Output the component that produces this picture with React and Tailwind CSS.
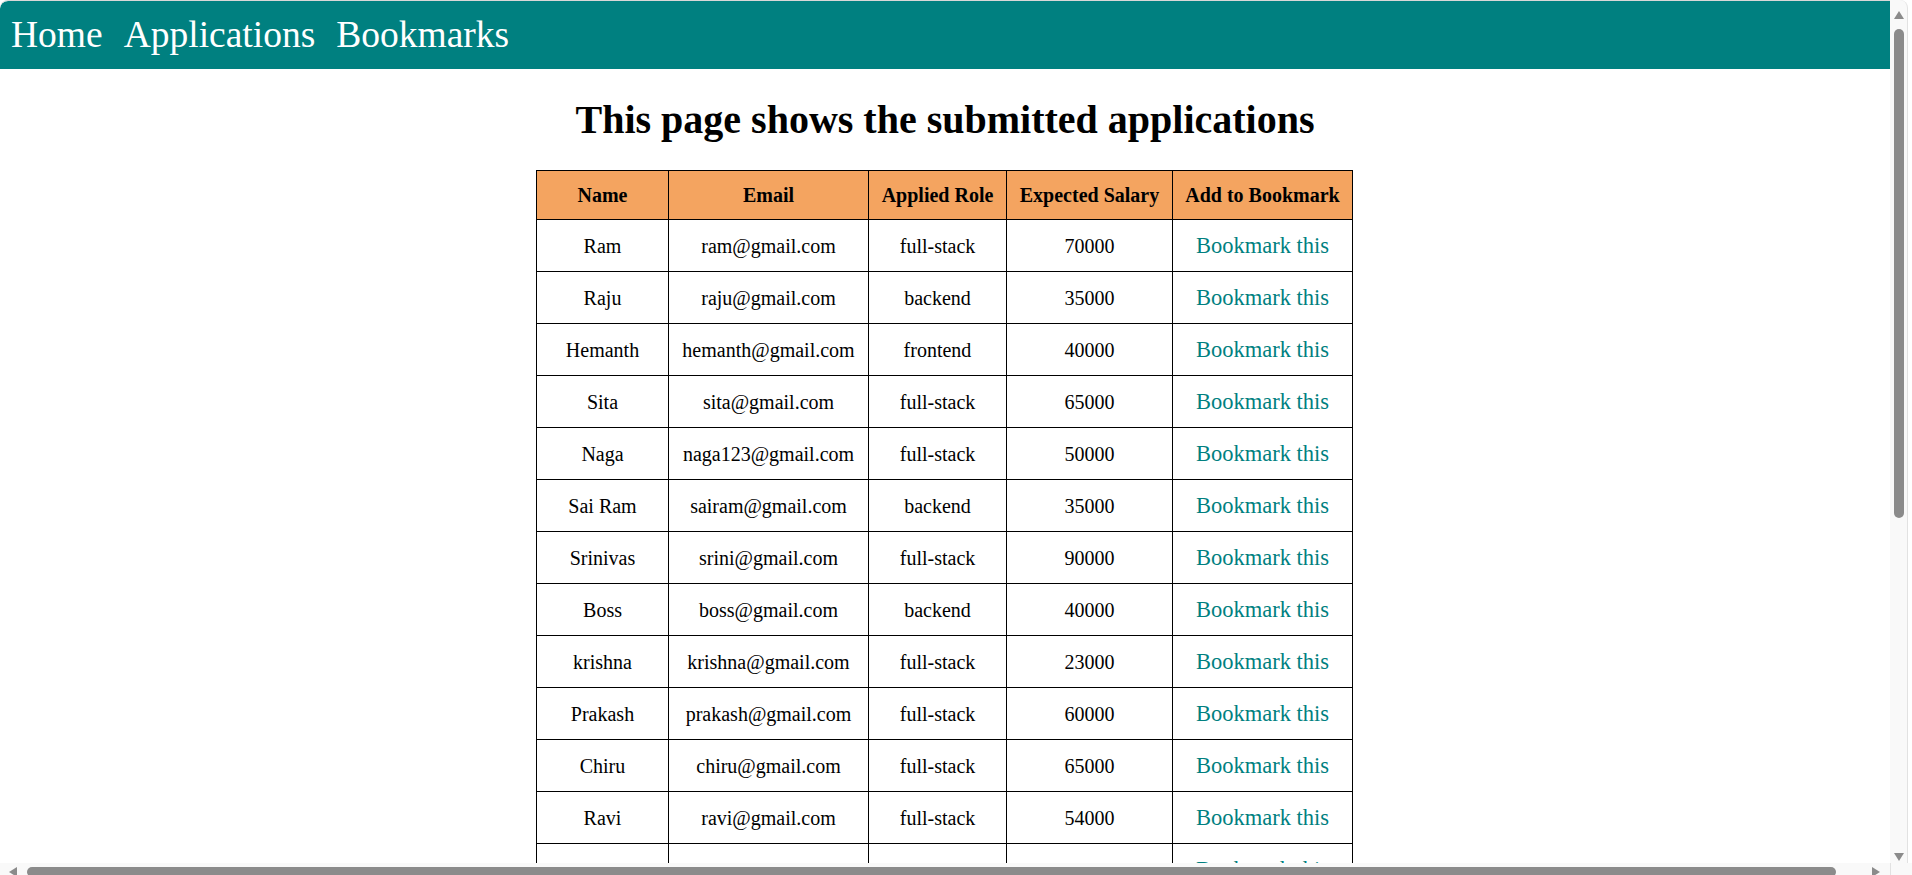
import React from "react";

const rows = [
  ["Ram", "ram@gmail.com", "full-stack", "70000"],
  ["Raju", "raju@gmail.com", "backend", "35000"],
  ["Hemanth", "hemanth@gmail.com", "frontend", "40000"],
  ["Sita", "sita@gmail.com", "full-stack", "65000"],
  ["Naga", "naga123@gmail.com", "full-stack", "50000"],
  ["Sai Ram", "sairam@gmail.com", "backend", "35000"],
  ["Srinivas", "srini@gmail.com", "full-stack", "90000"],
  ["Boss", "boss@gmail.com", "backend", "40000"],
  ["krishna", "krishna@gmail.com", "full-stack", "23000"],
  ["Prakash", "prakash@gmail.com", "full-stack", "60000"],
  ["Chiru", "chiru@gmail.com", "full-stack", "65000"],
  ["Ravi", "ravi@gmail.com", "full-stack", "54000"],
  ["Mahesh", "mahesh@gmail.com", "backend", "45000"],
  ["Kiran", "kiran@gmail.com", "frontend", "38000"],
];

function Tri({ dir, className }) {
  const pts = {
    up: "0,8 5,0 10,8",
    down: "0,0 10,0 5,8",
    left: "8,0 8,10 0,5",
    right: "0,0 0,10 8,5",
  }[dir];
  const w = dir === "up" || dir === "down" ? 10 : 8;
  const h = dir === "up" || dir === "down" ? 8 : 10;
  return (
    <svg width={w} height={h} viewBox={`0 0 ${w} ${h}`} className={className}>
      <polygon points={pts} fill="#8b8b8b" />
    </svg>
  );
}

export default function App() {
  return (
    <div
      className="w-[1912px] h-[875px] overflow-hidden bg-white flex flex-col"
      style={{ fontFamily: '"Liberation Serif", "Times New Roman", serif' }}
    >
      <div className="flex h-[863px] min-h-0">
        <div className="w-[1890px] overflow-hidden flex flex-col border-t border-[#d8d8d8] rounded-tl-[8px]">
          <nav className="h-[68px] shrink-0 bg-[#008080] rounded-tl-[8px] flex items-center pl-[11px] gap-[21px] text-white text-[37.5px] leading-none">
            <a>Home</a>
            <a>Applications</a>
            <a>Bookmarks</a>
          </nav>
          <h1 className="mt-[28px] text-center text-[40px] font-bold leading-[46px] text-black">
            This page shows the submitted applications
          </h1>
          <table className="mt-[27px] ml-[536px] w-[816px] table-fixed border-collapse border border-black text-[20px] text-black">
            <thead>
              <tr className="bg-[#f4a460] h-[49px]">
                <th className="w-[132px] border border-black font-bold">Name</th>
                <th className="w-[200px] border border-black font-bold">Email</th>
                <th className="w-[138px] border border-black font-bold">Applied Role</th>
                <th className="w-[166px] border border-black font-bold">Expected Salary</th>
                <th className="w-[180px] border border-black font-bold">Add to Bookmark</th>
              </tr>
            </thead>
            <tbody>
              {rows.map((r) => (
                <tr key={r[0]} className="h-[52px]">
                  <td className="border border-black text-center">{r[0]}</td>
                  <td className="border border-black text-center">{r[1]}</td>
                  <td className="border border-black text-center">{r[2]}</td>
                  <td className="border border-black text-center">{r[3]}</td>
                  <td className="border border-black text-center">
                    <a className="text-[#008080] text-[22.5px]">Bookmark this</a>
                  </td>
                </tr>
              ))}
            </tbody>
          </table>
        </div>
        <div className="w-[18px] bg-[#f9f9f9] border-r border-[#e2e2e2] rounded-tr-[8px] flex flex-col items-center">
          <Tri dir="up" className="mt-[11px]" />
          <div className="mt-[10px] w-[10px] h-[489px] rounded-full bg-[#8b8b8b]" />
          <div className="flex-1" />
          <Tri dir="down" className="mb-[2px]" />
        </div>
        <div className="w-[4px] bg-white" />
      </div>
      <div className="h-[12px] flex bg-[#f9f9f9]">
        <div className="w-[1890px] flex items-start pt-[4px]">
          <Tri dir="left" className="ml-[9px]" />
          <div className="ml-[10px] w-[1809px] h-[10px] rounded-full bg-[#8b8b8b]" />
          <Tri dir="right" className="ml-[36px]" />
        </div>
        <div className="flex-1 border-l border-[#e2e2e2]" />
      </div>
    </div>
  );
}
